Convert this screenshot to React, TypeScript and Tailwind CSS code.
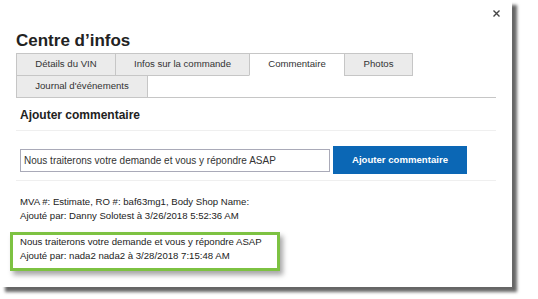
import React, { FC } from 'react';

const font = { fontFamily: '"Liberation Sans", Arial, sans-serif' };

type Tab = { label: string; width: string; active?: boolean; first?: boolean };

const tabs: Tab[] = [
    { label: 'Détails du VIN', width: 'w-[100px]', first: true },
    { label: 'Infos sur la commande', width: 'w-[135px]' },
    { label: 'Commentaire', width: 'w-[96px]', active: true },
    { label: 'Photos', width: 'w-[69px]' },
    { label: "Journal d'événements", width: 'w-[132px]', first: true },
];

const Comment: FC<{ text: string; meta: string }> = ({ text, meta }) => (
    <div className="text-[9.6px] leading-[14px] text-[#222]">
        <div>{text}</div>
        <div>{meta}</div>
    </div>
);

const App: FC = () => {
    return (
        <div className="w-[538px] h-[299px] bg-white overflow-hidden" style={font}>
            <div className="relative w-[512px] h-[287px] bg-white shadow-[5px_5px_3px_rgba(0,0,0,0.6)] pl-4 pr-4">
                <button className="absolute top-[10px] left-[493px] text-[#444]">
                    <svg width="7" height="7" viewBox="0 0 7 7">
                        <path d="M0.5 0.5 L6.5 6.5 M6.5 0.5 L0.5 6.5" stroke="currentColor" strokeWidth="1.4" />
                    </svg>
                </button>

                <h1 className="pt-[31px] text-[17px] leading-[20px] font-bold text-[#222]">Centre d’infos</h1>

                <div className="mt-[2px] flex flex-wrap border-b border-[#c6c6c6]">
                    {tabs.map(t => (
                        <div
                            key={t.label}
                            className={`${t.width} ${t.first ? '' : '-ml-px'} -mb-px h-[23px] flex items-center justify-center border border-[#c6c6c6] text-[9.6px] text-[#333] ${t.active ? 'bg-white border-b-white' : 'bg-[#ebebeb]'}`}
                        >
                            {t.label}
                        </div>
                    ))}
                </div>

                <div className="px-1">
                    <h2 className="mt-[9px] pb-[7px] text-[12px] leading-[16px] font-bold text-[#222] border-b border-[#efefef] -mx-1 px-1">
                        Ajouter commentaire
                    </h2>

                    <div className="mt-[15px] pb-[6px] flex items-center gap-[3px] border-b border-[#efefef] -mx-1 px-1">
                        <input
                            type="text"
                            defaultValue="Nous traiterons votre demande et vous y répondre ASAP"
                            className="w-[310px] h-[23px] border border-[#a9aab8] px-[3px] text-[10px] text-[#333] outline-none"
                            style={font}
                        />
                        <button className="w-[134px] h-[28px] bg-[#0b67b5] text-white text-[9.6px] font-bold">
                            Ajouter commentaire
                        </button>
                    </div>

                    <div className="mt-[14px]">
                        <Comment
                            text="MVA #: Estimate, RO #: baf63mg1, Body Shop Name:"
                            meta="Ajouté par: Danny Solotest à 3/26/2018 5:52:36 AM"
                        />
                    </div>

                    <div className="mt-[9px] -ml-[10px] w-[270px] h-[39px] border-[3px] border-[#7dc242] pl-[7px] shadow-[3px_4px_5px_rgba(0,0,0,0.35)]">
                        <Comment
                            text="Nous traiterons votre demande et vous y répondre ASAP"
                            meta="Ajouté par: nada2 nada2 à 3/28/2018 7:15:48 AM"
                        />
                    </div>
                </div>
            </div>
        </div>
    );
};

export default App;
